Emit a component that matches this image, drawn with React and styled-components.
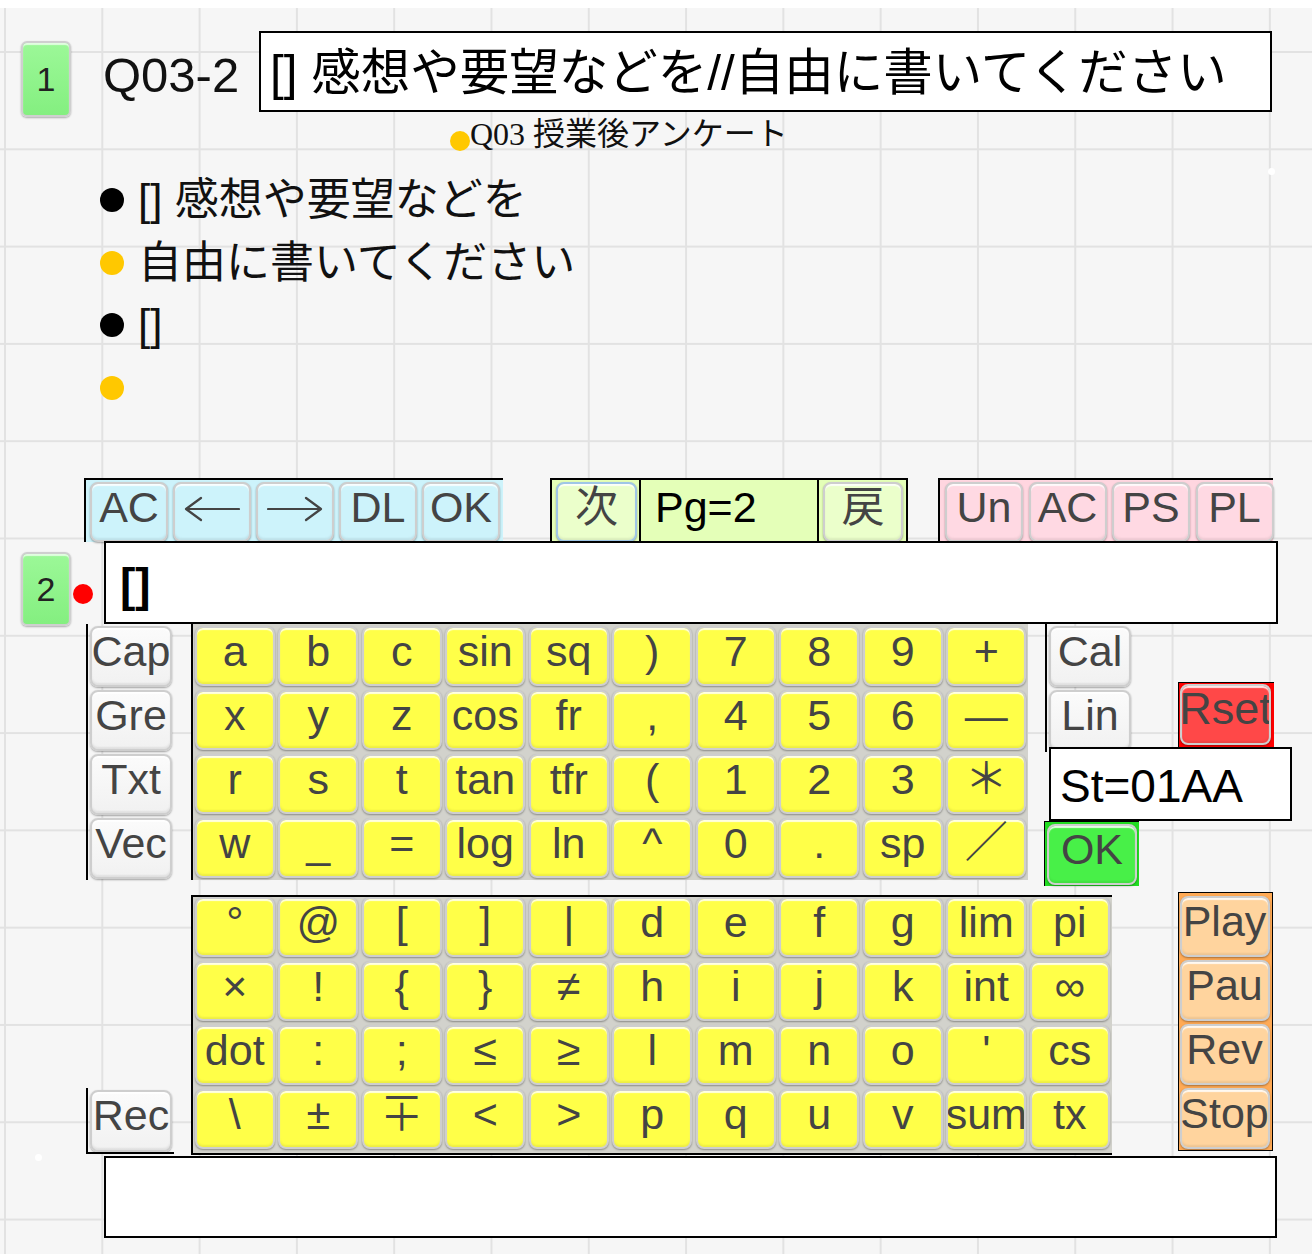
import React from 'react';
import styled, { createGlobalStyle } from 'styled-components';

const GlobalStyle = createGlobalStyle`
  html, body {
    margin: 0;
    padding: 0;
    background: #fff;
  }
  body {
    font-family: "Liberation Sans", "Noto Sans CJK JP", sans-serif;
  }
`;

const Page = styled.div`
  position: relative;
  margin-top: 8px;
  width: 1312px;
  height: 1246px;
  overflow: hidden;
  display: flex;
  flex-direction: column;
  background-color: #f6f6f6;
  background-image:
    linear-gradient(to right, #e2e2e2 2px, transparent 2px),
    linear-gradient(to bottom, #e2e2e2 2px, transparent 2px);
  background-size: 97.3px 97.3px;
  background-position: 4px 43px;
`;

/* ---------- header ---------- */

const Header = styled.div`
  display: flex;
  align-items: flex-start;
  height: 81px;
  margin-top: 23px;
  padding-left: 21px;
`;

const Badge = styled.div`
  box-sizing: border-box;
  flex: none;
  width: 50px;
  height: ${p => p.$h}px;
  margin-top: ${p => p.$mt}px;
  display: flex;
  align-items: center;
  justify-content: center;
  background: linear-gradient(#9cf898, #84ef80);
  border: 2px solid #cfcfcf;
  border-radius: 6px;
  box-shadow: inset 0 2px 1px rgba(255, 255, 255, 0.7), 0 1px 2px rgba(0, 0, 0, 0.3);
  color: #222;
  font-size: 34px;
  line-height: 1;
`;

const Title = styled.div`
  flex: none;
  width: 156px;
  margin-left: 32px;
  margin-top: 20px;
  font-size: 49px;
  line-height: 1;
  color: #111;
`;

const QuestionBox = styled.div`
  box-sizing: border-box;
  flex: none;
  width: 1013px;
  height: 81px;
  display: flex;
  align-items: center;
  padding: 3px 0 0 9px;
  background: #fff;
  border: 2px solid #000;
  font-size: 49.5px;
  line-height: 1;
  white-space: nowrap;
  color: #000;
`;

const Subtitle = styled.div`
  display: flex;
  align-items: center;
  height: 40px;
  margin-top: 2px;
  padding-left: 450px;
`;

const Dot = styled.span`
  flex: none;
  width: ${p => p.$size}px;
  height: ${p => p.$size}px;
  border-radius: 50%;
  background: ${p => p.$color};
  align-self: ${p => (p.$mt !== undefined ? 'flex-start' : 'center')};
  margin-top: ${p => p.$mt || 0}px;
  margin-left: ${p => p.$ml || 0}px;
  margin-right: ${p => p.$mr || 0}px;
`;

const SubText = styled.span`
  font-family: "Liberation Serif", "Noto Sans CJK JP", serif;
  font-size: 32px;
  line-height: 1;
  color: #111;
  white-space: nowrap;
`;

/* ---------- answer list ---------- */

const List = styled.div`
  margin-top: 15px;
  padding-left: 100px;
`;

const ListRow = styled.div`
  display: flex;
  align-items: center;
  height: 62.5px;
`;

const ListText = styled.span`
  font-size: 44px;
  line-height: 1;
  color: #111;
  white-space: nowrap;
`;

/* ---------- keys ---------- */

const Key = styled.div`
  box-sizing: border-box;
  flex: none;
  width: ${p => p.$w || 80}px;
  height: ${p => p.$h || 60}px;
  display: flex;
  justify-content: center;
  align-items: flex-start;
  overflow: hidden;
  white-space: nowrap;
  background: ${p => p.$bg};
  border: 2px solid ${p => (p.$focus ? '#9fc6e6' : '#cecece')};
  border-radius: 8px;
  box-shadow:
    inset 0 2px 1px rgba(255, 255, 255, 0.85),
    inset 0 -2px 2px rgba(0, 0, 0, 0.07),
    0 1px 2px rgba(0, 0, 0, 0.35);
  color: #444;
  font-size: ${p => p.$fs || 43}px;
  line-height: 46px;
`;

const ArrowSvg = styled.svg`
  display: block;
  margin-top: 12px;
`;

function Arrow({ dir }) {
  const d = dir === 'left'
    ? 'M2 13 L55 13 M17 2 L2 13 L17 24'
    : 'M1 13 L54 13 M39 2 L54 13 L39 24';
  return (
    <ArrowSvg width="56" height="26" viewBox="0 0 56 26">
      <path d={d} fill="none" stroke="#444" strokeWidth="2.2" strokeLinecap="round" strokeLinejoin="round" />
    </ArrowSvg>
  );
}

/* ---------- toolbar ---------- */

const Toolbar = styled.div`
  display: flex;
  align-items: flex-start;
  height: 64px;
  margin-top: 59px;
  padding-left: 84px;
`;

const Group = styled.div`
  box-sizing: border-box;
  flex: none;
  display: flex;
  gap: ${p => p.$gap}px;
  width: ${p => p.$w}px;
  height: 64px;
  margin-left: ${p => p.$ml || 0}px;
  padding: 2px 0 0 ${p => p.$pl}px;
  background: ${p => p.$bg};
  border-top: 2px solid #000;
  border-left: 2px solid #000;
  border-right: ${p => (p.$closed ? '2px solid #000' : 'none')};
`;

const PageCell = styled.div`
  box-sizing: border-box;
  flex: none;
  width: 180px;
  height: 62px;
  margin: -2px 4px 0 2px;
  padding: 4px 0 0 14px;
  border-left: 2px solid #000;
  border-right: 2px solid #000;
  font-size: 43px;
  line-height: 46px;
  color: #000;
`;

/* ---------- input row ---------- */

const InputRow = styled.div`
  display: flex;
  align-items: flex-start;
  height: 83px;
  margin-top: -1px;
  padding-left: 21px;
`;

const InputBox = styled.div`
  box-sizing: border-box;
  flex: none;
  width: ${p => p.$w}px;
  height: ${p => p.$h}px;
  margin-left: ${p => p.$ml}px;
  padding: 19px 0 0 14px;
  background: #fff;
  border: 2px solid #000;
  font-size: 46px;
  font-weight: bold;
  line-height: 1;
  color: #000;
`;

/* ---------- keyboard ---------- */

const KeyRow = styled.div`
  display: flex;
  align-items: flex-start;
  margin-top: ${p => p.$mt || 0}px;
  padding-left: 86px;
`;

const SideCol = styled.div`
  flex: none;
  display: grid;
  grid-auto-rows: 64px;
  align-items: start;
  width: 84px;
  margin-top: ${p => p.$mt || 0}px;
  margin-left: ${p => p.$ml || 0}px;
  padding-left: 2px;
  border-left: 2px solid #000;
  border-bottom: ${p => (p.$closed ? '2px solid #000' : 'none')};
  & > * {
    margin-top: 2px;
  }
`;

const YellowGrid = styled.div`
  flex: none;
  display: grid;
  grid-template-columns: repeat(${p => p.$cols}, 83.5px);
  grid-auto-rows: 64px;
  justify-items: center;
  align-items: start;
  margin-left: 17px;
  margin-top: ${p => p.$mt || 0}px;
  background: #d2d2cc;
  border-left: 2px solid #000;
  border-top: ${p => (p.$framed ? '2px solid #000' : 'none')};
  border-bottom: ${p => (p.$framed ? '2px solid #000' : 'none')};
  & > * {
    margin-top: ${p => p.$inset}px;
  }
`;

const RightArea = styled.div`
  flex: none;
  display: flex;
  flex-direction: column;
  width: 247px;
  margin-left: 17px;
`;

const RightTop = styled.div`
  display: flex;
  align-items: flex-start;
  height: 123px;
`;

const ColorFrame = styled.div`
  box-sizing: border-box;
  flex: none;
  display: flex;
  flex-direction: column;
  gap: 3px;
  width: ${p => p.$w}px;
  height: ${p => p.$h}px;
  margin-left: ${p => p.$ml || 0}px;
  margin-top: ${p => p.$mt || 0}px;
  padding: ${p => p.$pad};
  background: ${p => p.$bg};
  border-left: 1px solid #000;
  border-top: 1px solid #000;
  border-right: ${p => (p.$closed ? '1px solid #000' : 'none')};
  border-bottom: ${p => (p.$closed ? '1px solid #000' : 'none')};
`;

const StatusBox = styled.div`
  box-sizing: border-box;
  flex: none;
  display: flex;
  align-items: center;
  width: 243px;
  height: 74px;
  margin-left: 4px;
  padding: 4px 0 0 9px;
  background: #fff;
  border: 2px solid #000;
  font-size: 46px;
  line-height: 1;
  color: #000;
`;

const BottomBox = styled.div`
  box-sizing: border-box;
  flex: none;
  width: 1173px;
  height: 82px;
  margin: 1px 0 0 104px;
  background: #fff;
  border: 2px solid #000;
`;

const Speck = styled.span`
  position: absolute;
  left: ${p => p.$x}px;
  top: ${p => p.$y}px;
  width: 7px;
  height: 7px;
  border-radius: 50%;
  background: #fff;
`;

const YELLOW = '#ffff48';
const GRAY = 'linear-gradient(#fbfbfb, #f1f1f1)';

const grid1 = [
  ['a', 'b', 'c', 'sin', 'sq', ')', '7', '8', '9', '+'],
  ['x', 'y', 'z', 'cos', 'fr', ',', '4', '5', '6', '—'],
  ['r', 's', 't', 'tan', 'tfr', '(', '1', '2', '3', '＊'],
  ['w', '_', '=', 'log', 'ln', '^', '0', '.', 'sp', '／'],
];

const grid2 = [
  ['°', '@', '[', ']', '|', 'd', 'e', 'f', 'g', 'lim', 'pi'],
  ['×', '!', '{', '}', '≠', 'h', 'i', 'j', 'k', 'int', '∞'],
  ['dot', ':', ';', '≤', '≥', 'l', 'm', 'n', 'o', "'", 'cs'],
  ['\\', '±', '∓', '<', '>', 'p', 'q', 'u', 'v', 'sum', 'tx'],
];

const answers = [
  { color: '#000', text: '[] 感想や要望などを' },
  { color: '#ffc800', text: '自由に書いてください' },
  { color: '#000', text: '[]' },
  { color: '#ffc800', text: '' },
];

function KeyGrid({ rows, framed, mt, inset }) {
  return (
    <YellowGrid $cols={rows[0].length} $framed={framed} $mt={mt} $inset={inset}>
      {rows.flat().map((k, i) => (
        <Key key={i} $bg={YELLOW}>{k}</Key>
      ))}
    </YellowGrid>
  );
}

export default function App() {
  return (
    <>
      <GlobalStyle />
      <Page>
        <Header>
          <Badge $mt={10} $h={76}>1</Badge>
          <Title>Q03-2</Title>
          <QuestionBox>[] 感想や要望などを//自由に書いてください</QuestionBox>
        </Header>

        <Subtitle>
          <Dot $size={20} $color="#ffc800" $mt={17} />
          <SubText>Q03 授業後アンケート</SubText>
        </Subtitle>

        <List>
          {answers.map((a, i) => (
            <ListRow key={i}>
              <Dot $size={24} $color={a.color} $mr={14} />
              <ListText>{a.text}</ListText>
            </ListRow>
          ))}
        </List>

        <Toolbar>
          <Group $w={419} $pl={4} $gap={5} $bg="#cdf3fb">
            <Key $w={78} $bg="#cdf3fb">AC</Key>
            <Key $w={78} $bg="#cdf3fb"><Arrow dir="left" /></Key>
            <Key $w={78} $bg="#cdf3fb"><Arrow dir="right" /></Key>
            <Key $w={78} $bg="#cdf3fb">DL</Key>
            <Key $w={78} $bg="#cdf3fb">OK</Key>
          </Group>
          <Group $w={358} $ml={47} $pl={4} $gap={0} $bg="#e4ffb8" $closed>
            <Key $w={81} $bg="#ebffcb" $focus>次</Key>
            <PageCell>Pg=2</PageCell>
            <Key $w={80} $bg="#ebffcb">戻</Key>
          </Group>
          <Group $w={335} $ml={30} $pl={5} $gap={5.5} $bg="#ffd6e0">
            {['Un', 'AC', 'PS', 'PL'].map(k => (
              <Key key={k} $w={78} $bg="#ffd9e3">{k}</Key>
            ))}
          </Group>
        </Toolbar>

        <InputRow>
          <Badge $mt={11} $h={74}>2</Badge>
          <Dot $size={20} $color="#ff0000" $mt={43} $ml={2} />
          <InputBox $w={1174} $h={83} $ml={11}>[]</InputBox>
        </InputRow>

        <KeyRow>
          <SideCol>
            {['Cap', 'Gre', 'Txt', 'Vec'].map(k => (
              <Key key={k} $w={82} $h={61} $bg={GRAY}>{k}</Key>
            ))}
          </SideCol>
          <KeyGrid rows={grid1} inset={2} />
          <RightArea>
            <RightTop>
              <SideCol>
                {['Cal', 'Lin'].map(k => (
                  <Key key={k} $w={82} $h={61} $bg={GRAY}>{k}</Key>
                ))}
              </SideCol>
              <ColorFrame $w={96} $h={65} $ml={45} $mt={58} $pad="1px 3px 0 1px" $bg="#ff0000">
                <Key $w={91} $h={61} $fs={45} $bg="#ff4848">Rset</Key>
              </ColorFrame>
            </RightTop>
            <StatusBox>St=01AA</StatusBox>
            <ColorFrame $w={95} $h={65} $ml={-1} $pad="2px 2px 0 2px" $bg="#22dd22">
              <Key $w={90} $h={61} $bg="#48f048">OK</Key>
            </ColorFrame>
          </RightArea>
        </KeyRow>

        <KeyRow $mt={6}>
          <SideCol $mt={196} $closed>
            <Key $w={82} $h={62} $bg={GRAY}>Rec</Key>
          </SideCol>
          <KeyGrid rows={grid2} framed mt={3} inset={0} />
          <ColorFrame $w={95} $h={259} $ml={66} $pad="3px 3px 0 1px" $bg="#ffaa55" $closed>
            {['Play', 'Pau', 'Rev', 'Stop'].map(k => (
              <Key key={k} $w={90} $h={61} $bg="#ffd49e">{k}</Key>
            ))}
          </ColorFrame>
        </KeyRow>

        <BottomBox />

        <Speck $x={1268} $y={160} />
        <Speck $x={35} $y={1146} />
      </Page>
    </>
  );
}
